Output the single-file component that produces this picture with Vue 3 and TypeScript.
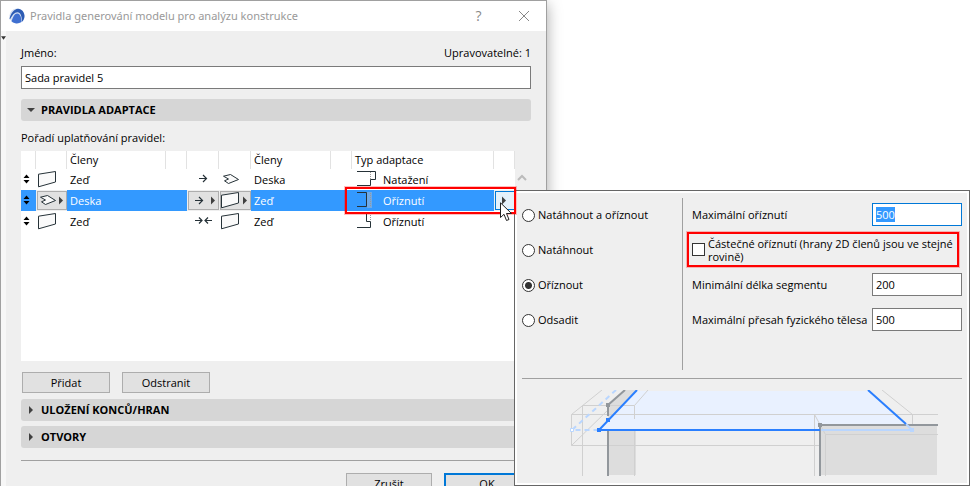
<script setup lang="ts">
import { onMounted, ref } from 'vue'

type Glyph = 'wall' | 'slab'
interface Rule {
  id: number
  from: Glyph
  direction: 'single' | 'meet'
  to: Glyph
  kind: 'extend' | 'trim' | 'step'
  label: string
}

const names: Record<Glyph, string> = { wall: 'Zeď', slab: 'Deska' }
const glyphs: Record<Glyph, string> = {
  wall: 'M2.5 5.2 19.5 2.5V13L2.5 17.8Z',
  slab: 'M4.500 7.200 11.500 5.500 19.500 10.500 9.500 14.500 5.500 11.800 9.500 10Z',
}
const kinds: Record<Rule['kind'], string> = {
  extend: 'M0 2.5H18.5V10.5H13.5V16.5H0',
  trim: 'M0 2.5H9.5V16.5H0',
  step: 'M9.5 2V10.5H13.5V16.5H0',
}
const rules: Rule[] = [
  { id: 1, from: 'wall', direction: 'single', to: 'slab', kind: 'extend', label: 'Natažení' },
  { id: 2, from: 'slab', direction: 'single', to: 'wall', kind: 'trim', label: 'Oříznutí' },
  { id: 3, from: 'wall', direction: 'meet', to: 'wall', kind: 'step', label: 'Oříznutí' },
]
const modes = [
  { value: 'both', label: 'Natáhnout a oříznout' },
  { value: 'extend', label: 'Natáhnout' },
  { value: 'trim', label: 'Oříznout' },
  { value: 'offset', label: 'Odsadit' },
]

const selected = ref(2)
const name = ref('Sada pravidel 5')
const mode = ref('trim')
const partial = ref(false)
const maxTrim = ref('500')
const minSegment = ref('200')
const maxOverlap = ref('500')
const maxTrimInput = ref<HTMLInputElement | null>(null)

function arrowPath(rule: Rule): string {
  if (rule.direction === 'meet') {
    return 'M8 9.5H15M12 6.500 15 9.500 12 12.500M25 9.500H18M21 6.500 18 9.500 21 12.500'
  }
  return rule.id === selected.value
    ? 'M8 10.5H15.500M12 7 15.500 10.500 12 14'
    : 'M12 9.5H19.500M16 6 19.500 9.500 16 13'
}

onMounted(() => maxTrimInput.value?.select())
</script>

<template>
  <main class="screen">
    <section class="dialog" aria-labelledby="dialog-title">
      <header class="titlebar">
        <svg class="logo" viewBox="0 0 16 16" aria-hidden="true">
          <circle cx="8" cy="8" r="7.6" fill="#d5e0f2" />
          <path d="M.5 10.500C2 5 5 1.300 9 .8c4 .2 6.500 3.700 6.500 7.200 0 2.500-1 4.500-2.500 5.800C13 8.500 11.500 4.300 8.500 4.300 5.500 4.300 3 7.500 1 11.500Z" fill="#2d5cb4" />
          <path d="M2.500 13.300C4 9 5.500 5.500 8.300 5.500c2.900 0 4.200 4.500 4.200 8.500C9 16.200 5 15.800 2.500 13.300Z" fill="#3f6fd0" />
        </svg>
        <h1 id="dialog-title">Pravidla generování modelu pro analýzu konstrukce</h1>
        <button type="button" class="caption-btn" aria-label="Nápověda">?</button>
        <button type="button" class="caption-btn" aria-label="Zavřít">
          <svg viewBox="0 0 12 12"><path d="M1 1 11 11M11 1 1 11" /></svg>
        </button>
      </header>

      <div class="content">
        <div class="name-row">
          <label for="rule-name">Jméno:</label>
          <span>Upravovatelné: 1</span>
        </div>
        <input id="rule-name" v-model="name" class="field" type="text" />

        <button type="button" class="section-head" aria-expanded="true">
          <svg viewBox="0 0 8 8"><path d="M0 2H8L4 6Z" /></svg>PRAVIDLA ADAPTACE
        </button>

        <p id="order-label" class="order">Pořadí uplatňování pravidel:</p>
        <div class="list">
          <div class="list-body">
            <table aria-labelledby="order-label">
              <colgroup>
                <col class="c-handle" /><col class="c-icon" /><col class="c-from" /><col class="c-gap" />
                <col class="c-pick" /><col class="c-pick" /><col class="c-to" /><col class="c-gap" />
                <col /><col class="c-gap" />
              </colgroup>
              <thead>
                <tr>
                  <th></th><th></th><th>Členy</th><th></th><th></th>
                  <th></th><th>Členy</th><th></th><th>Typ adaptace</th><th></th>
                </tr>
              </thead>
              <tbody>
                <tr v-for="rule in rules" :key="rule.id" :class="{ selected: rule.id === selected }" @click="selected = rule.id">
                  <td>
                    <svg class="handle" viewBox="0 0 12 21"><path d="M2.500 9 5.500 5.500 8.500 9ZM2.500 11 5.500 14.500 8.500 11Z" /></svg>
                  </td>
                  <td class="icon-cell">
                    <component :is="rule.id === selected ? 'button' : 'span'" class="pick">
                      <svg class="glyph" viewBox="0 0 32 21">
                        <path class="shape" :d="glyphs[rule.from]" />
                        <path v-if="rule.id === selected" class="more" d="M23 6.500 27 10.500 23 14.500Z" />
                      </svg>
                    </component>
                  </td>
                  <td>{{ names[rule.from] }}</td>
                  <td></td>
                  <td class="icon-cell">
                    <component :is="rule.id === selected ? 'button' : 'span'" class="pick">
                      <svg class="glyph" viewBox="0 0 32 21">
                        <path class="arrow" :d="arrowPath(rule)" />
                        <path v-if="rule.id === selected" class="more" d="M24 6.500 28 10.500 24 14.500Z" />
                      </svg>
                    </component>
                  </td>
                  <td class="icon-cell">
                    <component :is="rule.id === selected ? 'button' : 'span'" class="pick">
                      <svg class="glyph" viewBox="0 0 32 21">
                        <path class="shape" :d="glyphs[rule.to]" />
                        <path v-if="rule.id === selected" class="more" d="M24 6.500 28 10.500 24 14.500Z" />
                      </svg>
                    </component>
                  </td>
                  <td>{{ names[rule.to] }}</td>
                  <td></td>
                  <td>
                    <div class="kind">
                      <svg viewBox="0 0 22 21">
                        <path v-if="rule.kind === 'trim'" class="shade" d="M10 2H15V18H10Z" />
                        <path class="dots" :d="rule.kind === 'step' ? 'M13.500 2V10' : 'M13.500 3V17'" />
                        <path class="outline" :d="kinds[rule.kind]" />
                      </svg>
                      {{ rule.label }}
                    </div>
                  </td>
                  <td class="icon-cell">
                    <button v-if="rule.id === selected" type="button" class="pick open" aria-label="Nastavení pravidla">
                      <svg class="glyph" viewBox="0 0 32 21"><path class="more" d="M8 6.500 12 10.500 8 14.500Z" /></svg>
                    </button>
                  </td>
                </tr>
              </tbody>
            </table>
            <div class="highlight row-highlight"></div>
            <svg class="cursor" viewBox="0 0 13 20" aria-hidden="true">
              <path d="M.5 .8V15.500L4 12.300 6.500 18.500 9 17.500 6.500 11.500H11.500Z" />
            </svg>
          </div>
          <div class="scroll"><svg viewBox="0 0 10 8"><path d="M1 6 5 2 9 6" /></svg></div>
        </div>

        <div class="list-actions">
          <button type="button" class="btn">Přidat</button>
          <button type="button" class="btn">Odstranit</button>
        </div>
        <div class="sections">
          <button type="button" class="section-head" aria-expanded="false">
            <svg viewBox="0 0 8 8"><path d="M2 0 6 4 2 8Z" /></svg>ULOŽENÍ KONCŮ/HRAN
          </button>
          <button type="button" class="section-head" aria-expanded="false">
            <svg viewBox="0 0 8 8"><path d="M2 0 6 4 2 8Z" /></svg>OTVORY
          </button>
        </div>
        <footer class="footer">
          <button type="button" class="btn">Zrušit</button>
          <button type="button" class="btn primary">OK</button>
        </footer>
      </div>
      <svg class="edge-mark" viewBox="0 0 6 4" aria-hidden="true"><path d="M0 0H6L3 4Z" /></svg>
    </section>

    <div class="overlay">
      <section class="popup" aria-label="Nastavení pravidla">
        <div class="settings">
          <div class="modes" role="radiogroup" aria-label="Typ adaptace">
            <label v-for="item in modes" :key="item.value">
              <input v-model="mode" type="radio" name="mode" :value="item.value" />{{ item.label }}
            </label>
          </div>
          <div class="limits">
            <div class="limit">
              <label for="max-trim">Maximální oříznutí</label>
              <input id="max-trim" ref="maxTrimInput" v-model="maxTrim" class="field" type="text" />
            </div>
            <label class="partial">
              <input v-model="partial" type="checkbox" />
              <span>Částečné oříznutí (hrany 2D členů jsou ve stejné rovině)</span>
              <i class="highlight partial-highlight"></i>
            </label>
            <div class="limit">
              <label for="min-segment">Minimální délka segmentu</label>
              <input id="min-segment" v-model="minSegment" class="field" type="text" />
            </div>
            <div class="limit">
              <label for="max-overlap">Maximální přesah fyzického tělesa</label>
              <input id="max-overlap" v-model="maxOverlap" class="field" type="text" />
            </div>
          </div>
        </div>
        <div class="preview">
          <svg viewBox="0 0 440 86" aria-hidden="true">
            <path fill="#ddd" d="M86 15 102 0H115L86 30ZM86 41H114V85H86Z" />
            <path fill="#e9f1ff" d="M115 1H346L383 35H298V40H77Z" />
            <path fill="#ddd" d="M298 35H415V85H298Z" />
            <path class="wire" d="M80 0 49.500 24.500V55.500H298M49.500 24.500H416M60.500 15.500V86M60.500 15.500H112.500V29M126 0 112.500 15.500M49.500 55.500 86 20M112.500 41V86M292.500 24.500V86M292.500 24.500 303.500 44.500V86M303.500 44.500H416M360 0 390.500 24.500V34" />
            <path class="member" d="M103 0 86 15V26M86 41V86M416 35H298V86" />
            <path fill="#92979c" d="M84 13H88V17H84ZM296 33H300V37H296Z" />
            <path class="ghost" d="M94 0 50 40H77" />
            <path class="cut" d="M299 40H390L384 34" />
            <path fill="#b9d6ff" d="M388 38H392V42H388Z" />
            <path class="plate" d="M115 0 77 40H298M346 0 384 34" />
            <path fill="#2a7fff" d="M75 38H79V42H75ZM84 28H88V32H84Z" />
            <path fill="#fff" stroke="#b9d6ff" d="M48.500 38.500H51.500V41.500H48.500Z" />
          </svg>
        </div>
      </section>
    </div>
  </main>
</template>

<style>
body { margin: 0; background: #fff; }
</style>

<style scoped>
* { box-sizing: border-box; }
.screen {
  position: relative;
  display: grid;
  grid-template-columns: minmax(0, 547fr) minmax(0, 423fr);
  height: 100vh;
  overflow: hidden;
  color: #000;
  font: 11px/16px "Open Sans", "Noto Sans", sans-serif;
}
button, input { font: inherit; color: inherit; margin: 0; }
button { padding: 0; border: 0; background: none; }

.dialog {
  position: relative;
  border: solid #a0a0a0;
  border-width: 1px 1px 0;
  background: #efefef;
  box-shadow: 0 4px 14px rgb(0 0 0 / 35%);
}
.titlebar { display: flex; align-items: center; height: 30px; padding-left: 8px; background: #fff; color: #999; }
.logo { width: 16px; height: 16px; margin-right: 5px; }
h1 { flex: 1; margin: 0; font: 11px/16px "Noto Sans", sans-serif; white-space: nowrap; }
.caption-btn { width: 45px; height: 30px; font-size: 14px; color: #888; }
.caption-btn svg { display: block; width: 12px; height: 12px; margin: 0 auto; fill: none; stroke: #888; }
.content { padding: 14px 15px 0; border-left: 5px solid #f7f7f7; }
.name-row { display: flex; justify-content: space-between; margin-bottom: 5px; }
.field { display: block; width: 100%; height: 23px; padding: 0 3px; border: 1px solid #7a7a7a; border-radius: 0; background: #fff; outline: 0; }
.field:focus { border-color: #0078d7; }
.field::selection { background: #39f; color: #fff; }
.section-head {
  display: flex; align-items: center; gap: 6px; width: 100%; height: 22px; padding-left: 6px;
  border-radius: 3px; background: #d6d6d6; font-weight: 700;
}
.section-head svg { width: 8px; height: 8px; fill: #404040; }
.field + .section-head { margin-top: 10px; }
.order { margin: 9px 0 5px; }

.list { display: flex; min-height: 210px; }
.list-body { position: relative; flex: 1; background: #fff; }
.scroll { width: 16px; padding-top: 23px; }
.scroll svg { display: block; width: 10px; height: 8px; margin-left: 2px; fill: none; stroke: #bbb; stroke-width: 2; }
table { width: 100%; table-layout: fixed; border-collapse: separate; border-spacing: 0; }
.c-handle { width: 15px; }
.c-icon { width: 31px; }
.c-from { width: 99px; }
.c-gap { width: 21px; }
.c-pick { width: 32px; }
.c-to { width: 80px; }
th { height: 18px; padding: 0 0 0 3px; border-right: 1px solid #e2e2e2; font-weight: 400; text-align: left; white-space: nowrap; }
td { height: 21px; padding: 0 0 0 3px; line-height: 21px; white-space: nowrap; }
td:first-child, .icon-cell { padding: 0; }
.selected td { background: #39f; color: #fff; }
.selected .icon-cell { background: #efefef; }
.handle { display: block; width: 12px; height: 21px; fill: #000; }
.pick { display: block; height: 21px; overflow: hidden; }
.glyph { display: block; width: 32px; height: 21px; fill: none; stroke: #263238; }
.glyph .shape { fill: #fafafa; }
.glyph .arrow { stroke-width: 1.2; }
.glyph .more { fill: #404040; stroke: none; }
button.pick { width: calc(100% - 1px); height: 19px; margin: 1px 0 1px 1px; border: 1px solid #adadad; background: #e1e1e1; }
button.pick .glyph { margin: -2px; }
button.open { border-color: #0078d7; background: #e5f1fb; }
.kind { display: flex; gap: 4px; padding-left: 2px; }
.kind svg { width: 22px; height: 21px; fill: none; }
.outline { stroke: #263238; }
.kind .dots { stroke: #999; stroke-dasharray: 1 1; }
.kind .shade { fill: #6fa9e6; }
.highlight { position: absolute; border: 2px solid #f00; box-shadow: 0 0 0 1px rgb(255 0 0 / 25%); pointer-events: none; }
.row-highlight { z-index: 3; top: 36px; right: -1px; width: 171px; height: 27px; }
.cursor { position: absolute; z-index: 4; top: 51px; right: 2px; width: 13px; height: 20px; fill: #fff; stroke: #222; }

.btn { width: 88px; height: 21px; border: 1px solid #adadad; background: #e1e1e1; }
.list-actions { display: flex; gap: 12px; padding: 11px 1px 6px; }
.sections { display: grid; gap: 5px; }
.footer { display: flex; justify-content: flex-end; gap: 12px; margin-top: 12px; padding: 12px 1px 0; border-top: 1px solid #a0a0a0; }
.footer .btn { width: 86px; }
.footer .primary { border: 2px solid #0078d7; }
.edge-mark { position: absolute; top: 35px; left: 0; width: 5px; height: 4px; fill: #333; }

.overlay { position: absolute; inset: 190px 0 auto; z-index: 2; display: grid; grid-template-columns: minmax(0, 514fr) minmax(0, 456fr); }
.popup { grid-column: 2; padding: 7px 7px 9px; border: 1px solid #666; background: #efefef; outline: 2px solid #fff; outline-offset: -3px; }
.settings { display: flex; }
.modes { flex: 1; display: flex; flex-direction: column; gap: 19px; padding-top: 9px; }
.modes label { display: flex; align-items: center; gap: 3px; }
.modes input, .partial input { appearance: none; flex: none; width: 13px; height: 13px; border: 1px solid #333; background: #fff; }
.modes input { border-radius: 50%; }
.modes input:checked { background: radial-gradient(circle, #333 3px, #fff 4px); }
.limits { display: flex; flex-direction: column; width: 280px; height: 172px; padding: 5px 0 0 9px; border-left: 1px solid #a0a0a0; gap: 12px; }
.limit { display: flex; align-items: center; justify-content: space-between; height: 23px; white-space: nowrap; }
.limit .field { flex: none; width: 90px; }
.partial { position: relative; display: flex; align-items: center; gap: 3px; height: 23px; line-height: 13px; }
.partial input:checked { background: #333; box-shadow: inset 0 0 0 2px #fff; }
.partial-highlight { inset: -6px 3px -6px -5px; }
.preview { margin-top: 8px; padding-top: 11px; border-top: 1px solid #a0a0a0; }
.preview svg { display: block; width: 100%; fill: none; }
.wire { stroke: #d0d0d0; }
.member { stroke: #92979c; stroke-width: 2; }
.ghost { stroke: #b9d6ff; stroke-width: 2; stroke-dasharray: 5 4; }
.cut { stroke: #b9d6ff; stroke-width: 2; }
.plate { stroke: #2a7fff; stroke-width: 2; }
</style>
